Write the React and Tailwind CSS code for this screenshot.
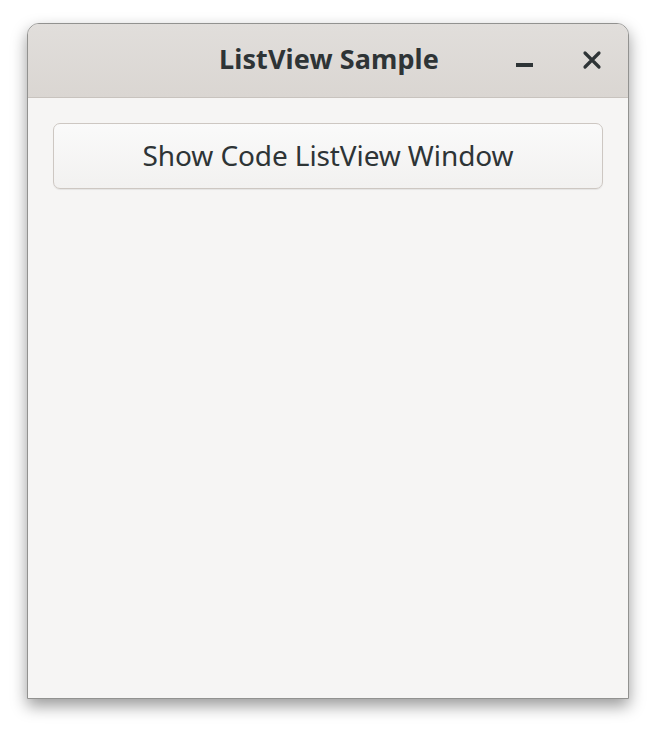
import React from 'react';

const App = () => {
  return (
    <div className="w-[656px] h-[732px] bg-white pt-[23px] pl-[27px]" style={{ fontFamily: '"Noto Sans", sans-serif' }}>
      <div className="w-[602px] h-[676px] flex flex-col rounded-t-[12px] border border-[#929290] bg-[#f6f5f4] shadow-[0_7px_16px_rgba(0,0,0,0.4)] overflow-hidden">
        {/* Header bar */}
        <div className="relative h-[74px] shrink-0 flex items-center justify-center bg-gradient-to-b from-[#e1dedb] to-[#dad6d2] border-b border-[#c8c3be]">
          <span className="text-[27px] font-bold text-[#2e3436] tracking-[0.1px] -mt-[2px] ml-[2px]">ListView Sample</span>
          <div className="absolute left-[488px] top-[39px] w-[17px] h-[4px] bg-[#2e3436]" />
          <svg width="20" height="20" viewBox="0 0 20 20" className="absolute left-[554px] top-[26px]">
            <path d="M3 3 L17 17 M17 3 L3 17" stroke="#2e3436" strokeWidth="3.2" strokeLinecap="round" />
          </svg>
        </div>
        {/* Content */}
        <div className="flex-1 px-[25px] pt-[25px]">
          <button className="w-full h-[66px] rounded-[7px] border border-[#cdc7c2] bg-gradient-to-b from-[#fafafa] to-[#f2f1f0] shadow-[0_1px_1px_rgba(0,0,0,0.07)] text-[28px] text-[#2e3436] tracking-[-0.1px] pb-[2px]">
            Show Code ListView Window
          </button>
        </div>
      </div>
    </div>
  );
};

export default App;
